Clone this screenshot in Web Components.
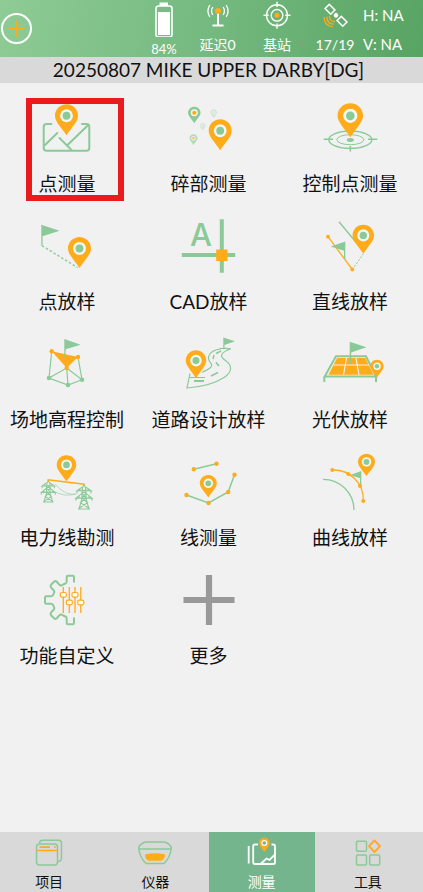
<!DOCTYPE html>
<html lang="zh-CN">
<head>
<meta charset="UTF-8">
<meta name="viewport" content="width=device-width, initial-scale=1">
<title>测量</title>
<style>
  body {
    margin: 0;
    background: #f1f1f1;
    color: #111;
    font-family: Lato, "Noto Sans CJK SC", sans-serif;
  }
</style>
</head>
<body>
<survey-app>
  <status-bar slot="status">
    <status-item icon="battery">84%</status-item>
    <status-item icon="antenna">延迟0</status-item>
    <status-item icon="base">基站</status-item>
    <status-item icon="satellite">17/19</status-item>
    <span slot="accuracy">H: NA</span>
    <span slot="accuracy">V: NA</span>
  </status-bar>
  <span slot="project">20250807 MIKE UPPER DARBY[DG]</span>

  <menu-tile icon="point" marked>点测量</menu-tile>
  <menu-tile icon="detail">碎部测量</menu-tile>
  <menu-tile icon="control">控制点测量</menu-tile>
  <menu-tile icon="stake">点放样</menu-tile>
  <menu-tile icon="cad">CAD放样</menu-tile>
  <menu-tile icon="line-stake">直线放样</menu-tile>
  <menu-tile icon="elevation">场地高程控制</menu-tile>
  <menu-tile icon="road">道路设计放样</menu-tile>
  <menu-tile icon="solar">光伏放样</menu-tile>
  <menu-tile icon="power">电力线勘测</menu-tile>
  <menu-tile icon="line">线测量</menu-tile>
  <menu-tile icon="curve">曲线放样</menu-tile>
  <menu-tile icon="custom">功能自定义</menu-tile>
  <menu-tile icon="more">更多</menu-tile>

  <nav-tab slot="tabs" icon="project">项目</nav-tab>
  <nav-tab slot="tabs" icon="device">仪器</nav-tab>
  <nav-tab slot="tabs" icon="measure" active>测量</nav-tab>
  <nav-tab slot="tabs" icon="tools">工具</nav-tab>
</survey-app>

<script>
const G = '#8bca98';
const O = '#ffab1a';

// Map pin: x is its centre, y its top, w and h its size
function pin(x, y, w, h, body = O, dot = G, hole = '#f4f8f2') {
  return `<g transform="translate(${x - w / 2} ${y}) scale(${w / 24} ${h / 32})">
    <path fill="${body}" d="M12 0C5.3 0 0 5.200 0 11.800C0 18 6.500 23.500 12 32C17.500 23.500 24 18 24 11.800C24 5.200 18.700 0 12 0z"/>
    <circle cx="12" cy="11.800" r="6.700" fill="${hole}"/>
    <circle cx="12" cy="11.800" r="4.100" fill="${dot}"/>
  </g>`;
}

function dots(points, color = O, r = 2.2) {
  return points.map(([x, y]) => `<circle cx="${x}" cy="${y}" r="${r}" fill="${color}"/>`).join('');
}

// Lattice tower used by the power line icon
function tower(x, y, w, h) {
  return `<g transform="translate(${x - w / 2} ${y}) scale(${w / 16} ${h / 24})" fill="none" stroke="${G}" stroke-width="1.1">
    <path d="M8 0L6 5V14L3 24M8 0L10 5V14L13 24M6 5L10 9L6 13L11.500 18L3.500 23M10 5L6 9L10 13L4.500 18L12.500 23M2 24H14"/>
    <path d="M6 3L1 6.500H15L10 3M1 6.500V9M15 6.500V9M6 9L0 13.500H16L10 9M0 13.500V16M16 13.500V16M4 4.500V6.500M12 4.500V6.500M3 11.500V13.500M13 11.500V13.500"/>
  </g>`;
}

const TILE_ICONS = {
  point: `
    <g fill="none" stroke="${G}" stroke-width="2" stroke-linecap="round">
      <path d="M14.500 26H9.500Q6.700 26 6.700 28.800V50Q6.700 52.800 9.500 52.800H49.500Q52.300 52.800 52.300 50V28.800Q52.300 26 49.500 26H45"/>
      <path d="M7.500 47.500L20.300 35M22.500 40L34.500 52M30 47.500L51.500 26.800"/>
    </g>
    ${pin(29.5, 6.300, 23, 31)}`,
  detail: `
    ${pin(15.3, 8.700, 12.500, 16.500, G, O)}
    <g opacity=".3">${pin(34.8, 11.300, 6.500, 8.700, G, G)}${pin(23.8, 25, 5.500, 7.500, G, G)}</g>
    <g opacity=".6">${pin(14.5, 36.300, 8, 10.700, G, O)}</g>
    ${pin(41.2, 21.300, 23, 31)}`,
  control: `
    <g fill="none" stroke="${G}">
      <ellipse cx="30.300" cy="41.700" rx="21.500" ry="8.700" stroke-width="1.400"/>
      <ellipse cx="30.300" cy="41.700" rx="13.500" ry="5" stroke-width="1"/>
      <path d="M3.700 41.300H13M48 41.300H57.300M30.300 48V53.500" stroke-width="1.600"/>
    </g>
    <ellipse cx="30.300" cy="42" rx="3.500" ry="1.900" fill="${G}"/>
    ${pin(30.3, 5.300, 25.500, 34)}`,
  stake: `
    <path d="M4.300 8.700L22.500 14.700L5.600 20.300V29.700H4.300z" fill="${G}"/>
    <path d="M5 29.700L40.500 51.500" stroke="${G}" stroke-width="1.400" stroke-dasharray="2.500 2"/>
    ${pin(42.5, 21, 23, 31)}`,
  cad: `
    <path d="M42.800 3.300V56.700M2.800 39H56.200" stroke="${G}" stroke-width="4"/>
    <rect x="37.200" y="33.500" width="11.300" height="11.500" fill="${O}"/>
    <text x="22" y="30" text-anchor="middle" font-family="Inter, sans-serif" font-size="31" font-weight="500" fill="${G}">A</text>`,
  'line-stake': `
    <path d="M19 5.700L37 27.500" stroke="${G}" stroke-width="1.400"/>
    <path d="M32.300 53.500L43.300 38" stroke="${G}" stroke-width="1" stroke-dasharray="2 1.500"/>
    <path d="M8 20.700L32.300 53.500" stroke="${O}" stroke-width="1.300"/>
    <path d="M10.700 30.500L25.300 25.500V43H24V34.700z" fill="${G}"/>
    ${dots([[8, 20.7], [32.3, 53.5]], O, 1.900)}
    ${pin(43.3, 8.700, 21.500, 29)}`,
  elevation: `
    <path d="M14.700 17.300L12 44L31 51L45 45.700L41 23M12 44L29.700 34L31 51M29.700 34L45 45.700" fill="none" stroke="${G}" stroke-width="1.200"/>
    <path d="M14.700 17.300L41 23L29.700 34z" fill="${O}"/>
    <path d="M27.300 5L43.700 10.700L28.600 15.300V23H27.300z" fill="${G}"/>
    ${dots([[14.7, 17.3], [41, 23], [29.7, 34]])}
    ${dots([[12, 44], [31, 51], [45, 45.7]], G, 2.300)}`,
  road: `
    <g fill="none" stroke="${G}" stroke-width="1.200">
      <path d="M52 14.800C42 13.500 31 16 29.500 23C28.500 29 36 29.500 31 34C29.500 35.500 26 37 23 38.300M11 39.500L8 54C22 53 35 50 45 43.500C54 37.500 53 31 46.500 26.500C41 23 40 19 52 14.800M11 43.500H26"/>
      <path d="M42 17L37 19.500M35 21L34 25" stroke-width="1.500"/>
      <path d="M37 28.500L40 32M32 42L39 38.500M15 47H25" stroke-width="1.800"/>
    </g>
    <path d="M44.300 3.500L56 7.300L45.500 11V14.700H44.300z" fill="${G}"/>
    ${pin(17, 16.300, 20.500, 28)}`,
  solar: `
    <path d="M16 22.300H46L56 42.500H4.700zM4.300 42.500V48M56 42.500V48" fill="none" stroke="${G}" stroke-width="2"/>
    <path d="M17 24H45.300L53.500 40.700H8.500z" fill="${O}"/>
    <path d="M13.500 31H49M26.500 24L23.500 41M36 24L39 41" stroke="#f1f1f1" stroke-width="1.200"/>
    <path d="M29.700 7.800L46.500 13.300L31.200 18.500V30H29.700z" fill="${G}"/>
    ${pin(57, 25.700, 13.300, 17.700)}`,
  power: `
    ${tower(11.3, 28, 14, 22)}
    ${tower(47, 32, 16, 25)}
    <path d="M18 32Q28 44 39 42M18 40Q28 45 39 42" fill="none" stroke="${G}" stroke-width=".6"/>
    <path d="M10.500 27.700L47.500 32.300" stroke="${O}" stroke-width="1.600"/>
    ${pin(29.5, 3.300, 19.500, 26)}`,
  line: `
    <path d="M14.800 17.300L37.500 11.700M7.500 43L29.500 51L49.200 40L55.500 22.700" fill="none" stroke="${G}" stroke-width="1.500"/>
    ${dots([[14.8, 17.3], [37.5, 11.7], [7.5, 43], [29.5, 51], [49.2, 40], [55.5, 22.7]])}
    ${pin(29.3, 23, 17, 22.500)}`,
  curve: `
    <path d="M3 27.300C20 27.300 34 41 34 58" fill="none" stroke="${G}" stroke-width="1.300"/>
    <path d="M30.300 23L41.300 19V34H40V26.300z" fill="${G}"/>
    <path d="M12.300 18C29 17.500 44 30 43.300 49" fill="none" stroke="${O}" stroke-width="1.300"/>
    ${dots([[12.3, 18], [28.3, 22], [40, 34], [43.3, 49]], O, 2)}
    ${pin(46.5, 1.700, 17, 22.300)}`,
  custom: `
    <path d="M37 12.500V7Q37 5.700 35.700 5.700H31Q29.700 5.700 29.700 7V11.500Q29.700 13 28.300 13.500L25 15.200Q23.500 15.800 22.500 14.800L19.800 11.800Q18.500 10.600 17.300 11.600L14 14.800Q13 16 14 17.300L16.800 20.500Q17.800 21.600 17 23L16 25.200Q15.500 26.300 14 26.300H9.300Q8 26.300 8 27.600V32.400Q8 33.700 9.300 33.700H14Q15.500 33.700 16 34.800L17 37Q17.800 38.400 16.800 39.500L14 42.700Q13 44 14 45.200L17.300 48.400Q18.500 49.400 19.800 48.200L22.500 45.200Q23.500 44.200 25 44.800L28.300 46.500Q29.700 47 29.700 48.500V53Q29.700 54.300 31 54.300H35.700Q37 54.300 37 53V47.500" fill="none" stroke="${G}" stroke-width="2"/>
    <path d="M26.300 17V43M32.300 17V43M38 17V43M43.800 17V43" stroke="${O}" stroke-width="1.300"/>
    <g fill="#fff" stroke="${O}" stroke-width="1.200">
      <rect x="23.300" y="22.500" width="6" height="4.600" rx="1.500"/>
      <rect x="29.300" y="30.200" width="6" height="4.600" rx="1.500"/>
      <rect x="35" y="22.500" width="6" height="4.600" rx="1.500"/>
      <rect x="40.800" y="30.200" width="6" height="4.600" rx="1.500"/>
    </g>`,
  more: `<path d="M30 5V55M4.500 30H55.500" stroke="#999" stroke-width="6.200"/>`
};

const STATUS_ICONS = {
  battery: `
    <path d="M13.500 1.500H22V5H13.500z" fill="#fff"/>
    <rect x="10" y="5" width="16" height="31" rx="2.500" fill="none" stroke="#fff" stroke-width="1.600"/>
    <rect x="12" y="11" width="12" height="23" fill="#fff"/>`,
  antenna: `
    <path d="M18 11V24.500M12.500 24.500H23.500" stroke="#fff" stroke-width="2"/>
    <circle cx="18" cy="10" r="3" fill="${O}"/>
    <path d="M12.800 6Q10.300 10 12.800 14M9.800 4Q6 10 9.800 16M23.200 6Q25.700 10 23.200 14M26.200 4Q30 10 26.200 16" fill="none" stroke="#fff" stroke-width="1.300"/>`,
  base: `
    <g fill="none" stroke="#fff" stroke-width="1.400">
      <circle cx="18" cy="14.300" r="10.500"/>
      <circle cx="18" cy="14.300" r="5.800"/>
      <path d="M18 .8V6M18 22.600V27.800M4.500 14.300H9.700M26.300 14.300H31.500"/>
    </g>
    <circle cx="18" cy="14.300" r="2.500" fill="${O}"/>`,
  satellite: `
    <g transform="rotate(45 19 14.300)">
      <g fill="none" stroke="#fff" stroke-width="1.500">
        <rect x="6.500" y="11.300" width="8" height="6"/>
        <rect x="23.500" y="11.300" width="8" height="6"/>
      </g>
      <circle cx="19" cy="14.300" r="2.300" fill="#fff"/>
    </g>
    <path d="M12.500 15Q12.200 20.500 18 20.500M9.800 15.500Q9.500 22.700 17 23.200M7.200 16Q7 25 16 25.800" fill="none" stroke="${O}" stroke-width="1.300"/>`
};

const TAB_ICONS = {
  project: `
    <g fill="none" stroke="${G}" stroke-width="1.500">
      <rect x="5.500" y="7" width="21" height="21" rx="3"/>
      <path d="M8.500 6Q8.800 3.300 12 3.300H27.500Q30.500 3.300 30.500 6.300V21Q30.500 24.300 27 24.500"/>
    </g>
    <path d="M5.500 13.500H26.500M8.500 10.200H19M23 10.200H24.500" stroke="${O}" stroke-width="1.700"/>`,
  device: `
    <path d="M1.800 12V10Q5 5 10 5H26Q31 5 34.200 10V12zM1.800 12Q3 21 9 26.500H27Q33 21 34.200 12" fill="none" stroke="${G}" stroke-width="1.500" stroke-linejoin="round"/>
    <path d="M8 17.500Q18 15 28 17.500Q28 22 24.500 23.800H11.500Q8 22 8 17.500z" fill="${O}"/>`,
  measure: `
    <g fill="none" stroke="#fff" stroke-width="1.800">
      <path d="M4.700 9V26.500M14 7.500H11Q9.200 7.500 9.200 9.300V25Q9.200 27 11 27H29.500Q31 27 31 25V9.300Q31 7.500 29 7.500H27.500"/>
      <path d="M16.500 27L22.500 21.500L25.500 23L31 17.500"/>
    </g>
    ${pin(20.3, .7, 10.500, 14.300, O, '#74b58d', '#fff')}`,
  tools: `
    <g fill="none" stroke="${G}" stroke-width="1.500">
      <rect x="6.500" y="4.300" width="10" height="10" rx="1"/>
      <rect x="6.500" y="18" width="10" height="10" rx="1"/>
      <rect x="19.700" y="18" width="10" height="10" rx="1"/>
    </g>
    <path d="M24.500 3.500L30 9.200L24.500 15L19 9.200z" fill="none" stroke="${O}" stroke-width="1.900" stroke-linejoin="round"/>`
};

class SurveyApp extends HTMLElement {
  constructor() {
    super();
    this.attachShadow({ mode: 'open' });
  }

  connectedCallback() {
    this.shadowRoot.innerHTML = `
      <style>
        :host {
          display: flex;
          flex-direction: column;
          min-height: 100vh;
        }
        h1 {
          margin: 0;
          height: 26px;
          line-height: 26px;
          font-size: 19px;
          font-weight: 400;
          text-align: center;
          background: #d9d9d9;
          padding-right: 6px;
        }
        main {
          flex: 1;
          display: grid;
          grid-template-columns: repeat(3, 112px);
          justify-content: space-between;
          align-content: start;
          padding: 0 17px 0 11px;
        }
        nav {
          background: #d9d9d9;
          overflow: hidden;
        }
        .tabs {
          display: grid;
          grid-template-columns: repeat(4, 1fr);
          margin: 0 2px 0 -4px;
        }
      </style>
      <slot name="status"></slot>
      <h1><slot name="project"></slot></h1>
      <main><slot></slot></main>
      <nav><div class="tabs"><slot name="tabs"></slot></div></nav>
    `;
  }
}

class StatusBar extends HTMLElement {
  constructor() {
    super();
    this.attachShadow({ mode: 'open' });
  }

  connectedCallback() {
    this.shadowRoot.innerHTML = `
      <style>
        :host {
          display: flex;
          justify-content: space-between;
          height: 57px;
          color: #fff;
          background: linear-gradient(100deg, #8fcb95, #74b97f 50%, #58a463);
        }
        button {
          align-self: center;
          width: 32px;
          height: 32px;
          margin: 0;
          padding: 0;
          border: 0;
          background: none;
        }
        svg { display: block; }
        .items {
          display: grid;
          grid-template-columns: 48px 59px 60px 56px 60px;
        }
        .accuracy {
          display: flex;
          flex-direction: column;
          justify-content: space-between;
          padding: 6px 0 4px;
          font-size: 15px;
          line-height: 18px;
        }
      </style>
      <button aria-label="添加">
        <svg width="32" height="32" viewBox="0 0 32 32" fill="none">
          <circle cx="16.500" cy="15.500" r="14.500" stroke="#fff" stroke-width="2"/>
          <path d="M16.500 7.500V23.500M8.500 15.500H24.500" stroke="${O}" stroke-width="2"/>
        </svg>
      </button>
      <div class="items">
        <slot></slot>
        <div class="accuracy"><slot name="accuracy"></slot></div>
      </div>
    `;
  }
}

class StatusItem extends HTMLElement {
  constructor() {
    super();
    this.attachShadow({ mode: 'open' });
  }

  connectedCallback() {
    this.shadowRoot.innerHTML = `
      <style>
        :host {
          display: flex;
          flex-direction: column;
          align-items: center;
          padding-top: 1px;
          font-size: 14px;
          line-height: 16px;
        }
        :host([icon="battery"]) {
          font-size: 13px;
          gap: 4px;
        }
      </style>
      <svg width="36" height="36" viewBox="0 0 36 36">${STATUS_ICONS[this.getAttribute('icon')]}</svg>
      <span><slot></slot></span>
    `;
  }
}

class MenuTile extends HTMLElement {
  constructor() {
    super();
    this.attachShadow({ mode: 'open' });
  }

  connectedCallback() {
    this.shadowRoot.innerHTML = `
      <style>
        :host {
          display: block;
          position: relative;
        }
        button {
          display: flex;
          flex-direction: column;
          align-items: center;
          gap: 13px;
          width: 100%;
          margin: 0;
          padding: 15px 0 4px;
          border: 0;
          background: none;
          color: inherit;
          font: inherit;
          font-size: 19px;
          line-height: 26px;
          white-space: nowrap;
        }
        svg { overflow: visible; }
        :host([marked])::after {
          content: "";
          position: absolute;
          box-sizing: border-box;
          top: 15px;
          left: 15px;
          width: 98px;
          height: 103px;
          border: 6px solid #ea1b1d;
          pointer-events: none;
        }
      </style>
      <button>
        <svg width="60" height="60" viewBox="0 0 60 60">${TILE_ICONS[this.getAttribute('icon')]}</svg>
        <span><slot></slot></span>
      </button>
    `;
  }
}

class NavTab extends HTMLElement {
  constructor() {
    super();
    this.attachShadow({ mode: 'open' });
  }

  connectedCallback() {
    this.shadowRoot.innerHTML = `
      <style>
        :host { display: block; }
        a {
          display: flex;
          flex-direction: column;
          align-items: center;
          gap: 4px;
          padding: 5px 0 1px;
          color: inherit;
          font-size: 14px;
          line-height: 18px;
          text-decoration: none;
        }
        :host([active]) a {
          background: #74b58d;
          color: #fff;
        }
      </style>
      <a href="#">
        <svg width="36" height="32" viewBox="0 0 36 32">${TAB_ICONS[this.getAttribute('icon')]}</svg>
        <span><slot></slot></span>
      </a>
    `;
  }
}

customElements.define('survey-app', SurveyApp);
customElements.define('status-bar', StatusBar);
customElements.define('status-item', StatusItem);
customElements.define('menu-tile', MenuTile);
customElements.define('nav-tab', NavTab);
</script>
</body>
</html>
